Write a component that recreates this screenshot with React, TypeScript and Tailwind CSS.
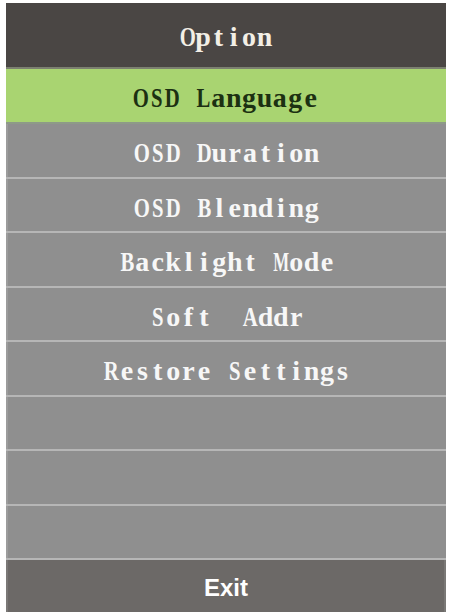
import React from "react";

const items = [
  "OSD Language",
  "OSD Duration",
  "OSD Blending",
  "Backlight Mode",
  "Soft  Addr",
  "Restore Settings",
  "",
  "",
  "",
];

const rowHeights = [53, 53, 52, 53, 52, 53, 52, 53, 52];

// Horizontal squeeze per glyph so wide serif letters stay inside their fixed-pitch cell.
function squeeze(ch: string) {
  if (ch === "M" || ch === "W") return "inline-block scale-x-[0.6]";
  if (ch === "m" || ch === "w") return "inline-block scale-x-[0.7]";
  if (/[A-Z]/.test(ch)) return "inline-block scale-x-[0.74]";
  return "inline-block";
}

// Fixed-pitch label: each glyph sits in its own cell so the serif face lines up like an OSD font.
function MonoLabel({ text, className }: { text: string; className: string }) {
  return (
    <span
      className={`inline-flex text-[28px] leading-none font-bold ${className}`}
      style={{ fontFamily: '"Liberation Serif", "Times New Roman", serif' }}
    >
      {Array.from(text).map((ch, i) => (
        <span key={i} className="inline-flex justify-center w-[15.4px]">
          <span className={squeeze(ch)}>{ch === " " ? "\u00a0" : ch}</span>
        </span>
      ))}
    </span>
  );
}

export default function App() {
  return (
    <div className="w-[451px] h-[612px] bg-white overflow-hidden">
      <div className="ml-[6px] mt-[3px] w-[440px] flex flex-col">
        {/* title bar */}
        <div className="h-[64px] bg-[#4a4644] flex items-center justify-center pt-[4px]">
          <MonoLabel text="Option" className="text-[#f3efe6]" />
        </div>
        <div className="h-[2px] bg-[#7c8070]" />
        {items.map((label, i) => {
          const selected = i === 0;
          return (
            <React.Fragment key={i}>
              <div
                className={`flex items-center justify-center pt-[5px] ${
                  selected ? "bg-[#a9d471]" : "bg-[#8f8f8f] border-l-2 border-[#9c9c9c]"
                }`}
                style={{ height: rowHeights[i] }}
              >
                {label && (
                  <MonoLabel
                    text={label}
                    className={selected ? "text-[#1c3012]" : "text-[#f7f7f7]"}
                  />
                )}
              </div>
              <div className={`h-[2px] ${selected ? "bg-[#8e9a88]" : "bg-[#b6b6b6]"}`} />
            </React.Fragment>
          );
        })}
        {/* exit bar */}
        <div className="h-[56px] bg-[#6c6967] flex items-center justify-center border-x-2 border-[#7a7876]">
          <span
            className="text-white font-bold text-[24px] leading-none"
            style={{ fontFamily: '"Liberation Sans", Arial, sans-serif' }}
          >
            Exit
          </span>
        </div>
      </div>
    </div>
  );
}
